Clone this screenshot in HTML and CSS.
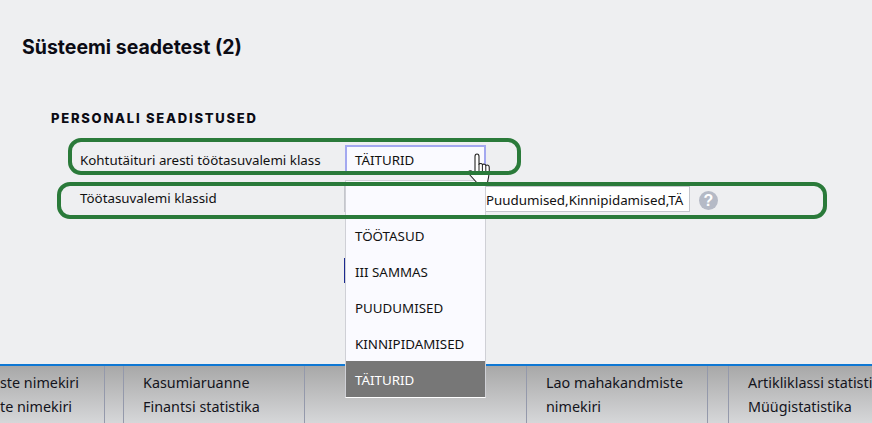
FILE: index.html
```html
<!DOCTYPE html>
<html lang="en">
<head>
  <meta charset="UTF-8" />
  <title>Süsteemi seadetest</title>
  <link rel="stylesheet" href="styles.css">
</head>
<body>

  <div class="content">
    <h1>Süsteemi seadetest (2)</h1>
    <h2>Personali seadistused</h2>

    <div class="row first">
      <label>Kohtutäituri aresti töötasuvalemi klass</label>
      <div class="select">TÄITURID</div>
    </div>
    <div class="row second">
      <label>Töötasuvalemi klassid</label>
      <div class="field">Puudumised,Kinnipidamised,TÄ</div>
      <div class="help">?</div>
    </div>
  </div>

  <div class="stub"></div>

  <ul class="dropdown">
    <li>&nbsp;</li>
    <li>TÖÖTASUD</li>
    <li>III SAMMAS</li>
    <li>PUUDUMISED</li>
    <li>KINNIPIDAMISED</li>
    <li class="active">TÄITURID</li>
  </ul>

  <svg class="cursor" width="28" height="34" viewBox="0 0 28 34">
    <path d="M9 3.500C9 2 10 1 11 1s2 1 2 2.500V11c1.500-1 3-.6 3.400.6 1.300-.9 3-.5 3.400.8 1.400-.8 3.200-.3 3.400 1.400.3 3.500.2 7-.6 10L21 32H13L3 21c-1-1.200-.8-2.500.2-3s2.300-.2 3.300.8L9 21z" fill="#fff" stroke="#222" stroke-width="1.100"/>
    <path d="M13 11v7M16.400 11.600V18M19.800 12.400V18" fill="none" stroke="#222" stroke-width="1"/>
  </svg>

  <!-- green marks drawn over the screenshot -->
  <div class="mark mark-one"></div>
  <div class="mark mark-two"></div>

  <nav class="bottom">
    <div class="cell cut"><span>ste nimekiri</span><span>te nimekiri</span></div>
    <div class="cell gap"></div>
    <div class="cell wide"><span>Kasumiaruanne</span><span>Finantsi statistika</span></div>
    <div class="cell empty"></div>
    <div class="cell wide"><span>Lao mahakandmiste</span><span>nimekiri</span></div>
    <div class="cell gap gap-two"></div>
    <div class="cell last"><span>Artikliklassi statistika</span><span>Müügistatistika</span></div>
  </nav>

</body>
</html>
```

FILE: styles.css
```css
html, body {
  height: 100%;
}

body {
  margin: 0;
  background-color: #eeeff1;
  color: #111;
  font-family: 'Noto Sans', 'Open Sans', sans-serif;
  font-size: 13.35px;
  overflow: hidden;
  position: relative;
}

.content {
  padding: 36px 0 0 22px;
}

h1 {
  margin: 0;
  font-family: Inter, sans-serif;
  font-size: 19.500px;
  font-weight: 700;
  line-height: 22px;
  color: #0b0b14;
}

h2 {
  margin: 52px 0 0 29px;
  font-family: Inter, sans-serif;
  font-size: 13px;
  font-weight: 800;
  line-height: 16px;
  letter-spacing: 1.750px;
  text-transform: uppercase;
  color: #0b0b14;
}

.row {
  display: flex;
  align-items: center;
  margin-left: 58px;
}

.row label {
  width: 265px;
}

.first {
  margin-top: 19px;
}

.first label {
  margin-top: 1px;
}

.second {
  margin-top: 13px;
}

.second label {
  margin-bottom: 2px;
}

.select {
  box-sizing: border-box;
  width: 141px;
  height: 28px;
  padding: 0 8px;
  line-height: 26px;
  background-color: #fafaff;
  border: 1px solid #a3a8f0;
  border-width: 2px 2px 0 2px;
}

.field {
  box-sizing: border-box;
  width: 346px;
  height: 26px;
  margin-left: -1px;
  padding-left: 141px;
  line-height: 26px;
  background-color: #fff;
  border: 1px solid #c4c6cc;
  white-space: nowrap;
  overflow: hidden;
}

.help {
  width: 19px;
  height: 19px;
  margin: 2px 0 0 9px;
  border-radius: 50%;
  background-color: #b5bac6;
  color: #fff;
  font-family: 'Liberation Sans', sans-serif;
  font-size: 16px;
  font-weight: 700;
  line-height: 19px;
  text-align: center;
}

.mark {
  position: absolute;
  box-sizing: border-box;
  border: 4px solid #2a7a3a;
  border-radius: 13px;
  z-index: 4;
}

.mark-one {
  left: 68px;
  top: 138px;
  width: 453px;
  height: 37px;
}

.mark-two {
  left: 57px;
  top: 182px;
  width: 770px;
  height: 37px;
}

.stub {
  position: absolute;
  left: 344px;
  top: 258px;
  width: 2px;
  height: 25px;
  background-color: #1c2a90;
}

.dropdown {
  position: absolute;
  left: 345px;
  top: 180px;
  width: 139px;
  margin: 0;
  padding: 0;
  list-style: none;
  background-color: #fafaff;
  border: 1px solid #cfd0d6;
  border-bottom: 1px solid #fff;
  z-index: 2;
}

.dropdown li {
  height: 36px;
  padding-left: 9px;
  line-height: 38px;
}

.dropdown .active {
  background-color: #777;
  color: #fff;
}

.cursor {
  position: absolute;
  left: 466px;
  top: 153px;
  z-index: 3;
}

.bottom {
  position: absolute;
  left: 0;
  right: 0;
  bottom: 0;
  height: 57px;
  display: flex;
  border-top: 2px solid #0f78d4;
  background: linear-gradient(#a8a8a8, #d6d7d9);
  font-size: 14.350px;
  line-height: 24px;
  color: #14141c;
}

.cell {
  box-sizing: border-box;
  padding: 5px 0 0 19px;
  border-right: 1px solid #9499ab;
  white-space: nowrap;
  overflow: hidden;
}

.cell span {
  display: block;
}

.cut {
  width: 105px;
  padding-left: 0;
}

.gap {
  width: 19px;
  padding: 0;
}

.gap-two {
  width: 21px;
}

.wide {
  width: 181px;
}

.empty {
  width: 222px;
  padding: 0;
}

.last {
  flex: 1;
  border-right: 0;
}
```
